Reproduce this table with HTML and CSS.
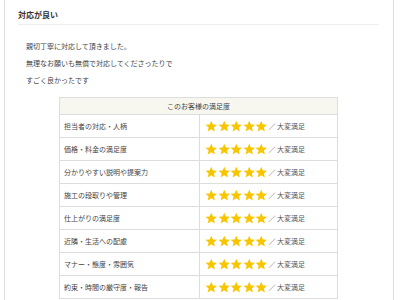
FILE: index.html
```html
<!DOCTYPE html>
<html lang="ja">
<head>
<meta charset="utf-8">
<link rel="stylesheet" href="styles.css">
</head>
<body>
<svg width="0" height="0" class="defs">
  <defs>
    <path id="star" d="M6 0.6 L7.6 4.2 L11.5 4.5 L8.5 7.1 L9.5 11 L6 8.9 L2.5 11 L3.5 7.1 L0.5 4.5 L4.4 4.2 Z"/>
  </defs>
</svg>
<div class="review">
  <h2 class="review-title">対応が良い</h2>
  <div class="review-body">
    <p>親切丁寧に対応して頂きました。</p>
    <p>無理なお願いも無償で対応してくださったりで</p>
    <p>すごく良かったです</p>
  </div>
  <table class="rating">
    <thead>
      <tr><th colspan="2">このお客様の満足度</th></tr>
    </thead>
    <tbody id="rows"></tbody>
  </table>
</div>
<script>
  const items = [
    "担当者の対応・人柄",
    "価格・料金の満足度",
    "分かりやすい説明や提案力",
    "施工の段取りや管理",
    "仕上がりの満足度",
    "近隣・生活への配慮",
    "マナー・態度・雰囲気",
    "約束・時間の厳守度・報告"
  ];
  const star = '<svg class="star" viewBox="0 0 12 12"><use href="#star"/></svg>';
  document.getElementById("rows").innerHTML = items.map(t =>
    '<tr><td class="label">' + t + '</td><td class="score"><span class="stars">' +
    star.repeat(5) + '</span><span class="word">／ 大変満足</span></td></tr>'
  ).join("");
</script>
</body>
</html>
```
FILE: styles.css
```css
html, body {
  margin: 0;
  padding: 0;
  background: #fff;
}
body {
  font-family: "Noto Sans CJK JP", "Noto Sans", sans-serif;
  color: #444;
}
.defs {
  position: absolute;
}
.review {
  margin-left: 4px;
  width: 388px;
  height: 300px;
  border-left: 1px solid #ddd;
  border-right: 1px solid #ddd;
  box-sizing: content-box;
}
.review-title {
  margin: 0 14px 0 13px;
  padding: 9px 0 4px;
  font-size: 8px;
  line-height: 11px;
  font-weight: bold;
  color: #333;
  border-bottom: 1px solid #eee;
}
.review-body {
  padding: 13px 0 0 21px;
}
.review-body p {
  margin: 0;
  font-size: 7px;
  line-height: 17px;
  color: #444;
}
.rating {
  margin: 8px 0 0 54px;
  width: 279px;
  border-collapse: collapse;
  font-size: 7px;
  color: #444;
}
.rating th {
  background: #f7f6ef;
  font-weight: normal;
  height: 16px;
  padding: 0;
  border: 1px solid #ddd;
  text-align: center;
}
.rating td {
  height: 22px;
  padding: 0;
  border: 1px solid #ddd;
}
.rating .label {
  width: 135px;
  padding-left: 4px;
}
.rating .score {
  padding-left: 5px;
}
.stars {
  display: inline-flex;
  vertical-align: middle;
}
.star {
  width: 12.5px;
  height: 12.5px;
  fill: #f7c600;
}
.word {
  vertical-align: middle;
  margin-left: 1px;
  color: #555;
}
```
